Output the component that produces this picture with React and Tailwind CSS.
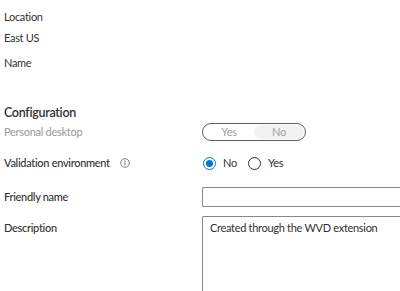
export default function App() {
  const font = { fontFamily: '"Segoe UI", Lato, "Noto Sans", sans-serif' };
  return (
    <div className="w-[400px] h-[291px] overflow-hidden bg-white text-[#323130] text-[11px] tracking-[-0.3px]" style={font}>
      <div className="pl-[4px] pt-[7px] flex flex-col">
        <div className="h-[20px] flex items-center">Location</div>
        <div className="h-[20px] mt-[1px] flex items-center">East US</div>
        <div className="h-[20px] mt-[5px] flex items-center">Name</div>
        <div className="h-[20px] mt-[30px] flex items-center text-[12.5px] font-semibold">Configuration</div>
        <div className="h-[18px] flex items-center">
          <div className="w-[198px] text-[#a19f9d] font-medium">Personal desktop</div>
          <div className="w-[104px] h-[18px] rounded-full border border-[#605e5c] flex items-center p-[1px] text-[#a19f9d]">
            <div className="flex-1 h-full flex items-center justify-center">Yes</div>
            <div className="flex-1 h-full flex items-center justify-center rounded-full bg-[#f3f2f1]">No</div>
          </div>
        </div>
        <div className="h-[20px] mt-[12px] flex items-center">
          <div className="w-[198px] flex items-center font-medium">
            <span>Validation environment</span>
            <svg className="ml-[10px]" width="10" height="10" viewBox="0 0 10 10">
              <circle cx="5" cy="5" r="4.3" fill="none" stroke="#605e5c" strokeWidth="0.8" />
              <line x1="5" y1="4.2" x2="5" y2="7.3" stroke="#605e5c" strokeWidth="0.9" />
              <circle cx="5" cy="2.9" r="0.55" fill="#605e5c" />
            </svg>
          </div>
          <div className="flex items-center pl-[1px]">
            <div className="w-[13px] h-[13px] rounded-full border border-[#0078d4] flex items-center justify-center">
              <div className="w-[7px] h-[7px] rounded-full bg-[#0078d4]" />
            </div>
            <span className="ml-[7px]">No</span>
            <div className="ml-[11px] w-[13px] h-[13px] rounded-full border border-[#323130]" />
            <span className="ml-[7px]">Yes</span>
          </div>
        </div>
        <div className="h-[20px] mt-[14px] flex items-center">
          <div className="w-[198px] font-medium">Friendly name</div>
          <div className="flex-1 h-[20px] border border-[#8a8886] rounded-l-[2px] border-r-0" />
        </div>
        <div className="mt-[9px] flex">
          <div className="w-[198px] pt-[4px] font-medium">Description</div>
          <div className="flex-1 h-[90px] border border-[#8a8886] border-r-0 rounded-l-[2px] px-[7px] pt-[3px] whitespace-nowrap">
            Created through the WVD extension
          </div>
        </div>
      </div>
    </div>
  );
}
